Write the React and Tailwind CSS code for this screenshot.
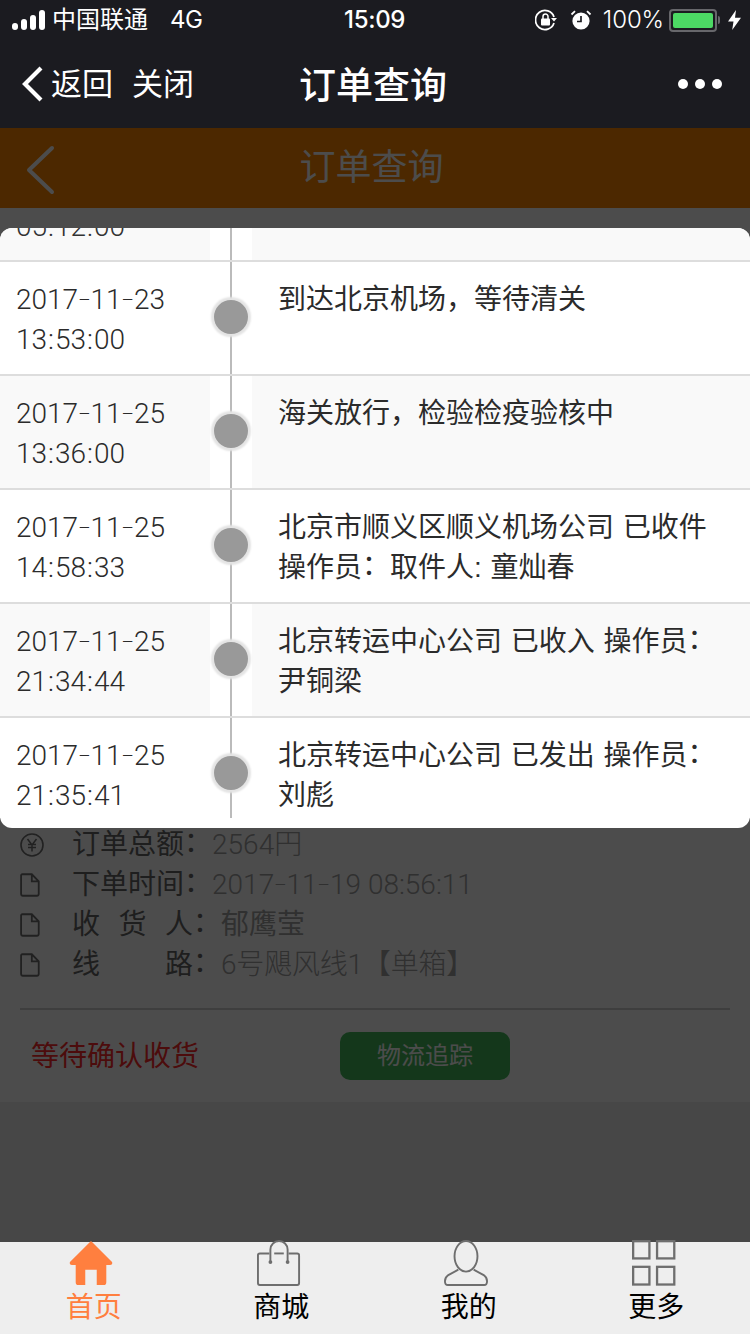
const FONT = "font-['Liberation_Sans','Noto_Sans_CJK_SC',sans-serif]";
const DIGITS = "font-['Roboto','Noto_Sans_CJK_SC',sans-serif] font-light";

const rows = [
  { time: ['2017–11–23', '13:53:00'], text: ['到达北京机场，等待清关'], alt: false },
  { time: ['2017–11–25', '13:36:00'], text: ['海关放行，检验检疫验核中'], alt: true },
  { time: ['2017–11–25', '14:58:33'], text: ['北京市顺义区顺义机场公司 已收件', '操作员：取件人: 童灿春'], alt: false },
  { time: ['2017–11–25', '21:34:44'], text: ['北京转运中心公司 已收入 操作员：', '尹铜梁'], alt: true },
  { time: ['2017–11–25', '21:35:41'], text: ['北京转运中心公司 已发出 操作员：', '刘彪'], alt: false, last: true },
];

function DateText({ value }) {
  const parts = value.split('–');
  return (
    <span className={DIGITS}>
      {parts.map((p, i) => (
        <span key={i}>
          {p}
          {i < parts.length - 1 && <span className="text-[19px] leading-none relative -top-[3px]">–</span>}
        </span>
      ))}
    </span>
  );
}

function TimeText({ value }) {
  const parts = value.split(':');
  return (
    <span className={DIGITS}>
      {parts.map((p, i) => (
        <span key={i}>
          {p}
          {i < parts.length - 1 && <span className="mx-px">:</span>}
        </span>
      ))}
    </span>
  );
}

function Colon() {
  return <span className="relative -top-[2px]">：</span>;
}

function Txt({ value }) {
  const parts = value.split('：');
  return (
    <>
      {parts.map((p, i) => (
        <span key={i}>
          {p}
          {i < parts.length - 1 && <Colon />}
        </span>
      ))}
    </>
  );
}

function Signal() {
  return (
    <svg width="34" height="22" viewBox="0 0 34 22" className="mr-[6px]">
      <rect x="0" y="14" width="6" height="7" rx="3" fill="#fff" />
      <rect x="9" y="10" width="6" height="11" rx="3" fill="#fff" />
      <rect x="18" y="6" width="6" height="15" rx="3" fill="#fff" />
      <rect x="27" y="1" width="6" height="20" rx="3" fill="#fff" />
    </svg>
  );
}

function StatusBar() {
  return (
    <div className="h-10 flex items-center relative text-white text-[24px] pl-3">
      <Signal />
      <span>中国联通</span>
      <span className="ml-[22px] font-['Inter',sans-serif] tracking-[-0.5px]">4G</span>
      <span className="absolute left-[344px] top-[5px] leading-[30px] font-['Inter',sans-serif] font-medium tracking-[-0.3px]">15:09</span>
      <div className="ml-auto flex items-center pr-[9px]">
        <svg width="24" height="22" viewBox="0 0 24 22" fill="none" className="mr-[11px]">
          <path d="M19 14 A 9.5 9.5 0 1 1 19 8" stroke="#fff" strokeWidth="1.8" />
          <path d="M16 9 h6 l-3 3.6 z" fill="#fff" />
          <rect x="6" y="9.5" width="9" height="7" rx="1" fill="#fff" />
          <path d="M8 10 V7.5 a2.5 2.5 0 0 1 5 0 V10" stroke="#fff" strokeWidth="1.5" />
        </svg>
        <svg width="22" height="22" viewBox="0 0 22 22" fill="none" className="mr-[11px]">
          <circle cx="11" cy="12" r="8.6" fill="#fff" />
          <path d="M11 7 V12.5 H7" stroke="#1b1b20" strokeWidth="1.7" />
          <path d="M1.5 5.5 L5 2.2 M20.5 5.5 L17 2.2" stroke="#fff" strokeWidth="1.8" />
        </svg>
        <span className="font-['Inter',sans-serif] font-light mr-[5px] tracking-[-0.1px]">100%</span>
        <div className="w-[48px] h-[23px] rounded-[4px] border-2 border-[#67676b] p-[2px] flex">
          <div className="flex-1 bg-[#4cd964] rounded-[2px]" />
        </div>
        <div className="w-[2px] h-[8px] bg-[#67676b] rounded-r-[2px] ml-[1px] mr-[8px]" />
        <svg width="13" height="20" viewBox="0 0 13 20"><path d="M8 0 L0 11.5 H5.5 L4.2 20 L13 7.8 H7 Z" fill="#fff" /></svg>
      </div>
    </div>
  );
}

function NavBar() {
  return (
    <div className="h-[88px] relative flex items-center text-white pl-[22px] pr-[28px]">
      <svg width="22" height="36" viewBox="0 0 22 36" fill="none" className="mr-[7px]">
        <path d="M19 2 L3 18 L19 34" stroke="#fff" strokeWidth="4.2" />
      </svg>
      <span className="text-[31px] pt-[3px]">返回</span>
      <span className="text-[31px] pt-[3px] ml-[19px]">关闭</span>
      <span className="absolute left-0 right-[4px] top-[19px] text-center text-[37px] font-medium pointer-events-none">订单查询</span>
      <div className="ml-auto flex gap-[7px]">
        <span className="w-[10px] h-[10px] rounded-full bg-white" />
        <span className="w-[10px] h-[10px] rounded-full bg-white" />
        <span className="w-[10px] h-[10px] rounded-full bg-white" />
      </div>
    </div>
  );
}

function PageHeader() {
  return (
    <div className="h-20 bg-[#fd8500] relative flex items-center justify-center pr-[7px]">
      <svg width="30" height="50" viewBox="0 0 30 50" fill="none" className="absolute left-[25px] top-[17px]">
        <path d="M27 3 L4 25 L27 47" stroke="#fff" strokeWidth="4" strokeLinecap="round" strokeLinejoin="round" />
      </svg>
      <span className="text-white text-[36px]">订单查询</span>
    </div>
  );
}

function Doc() {
  return (
    <svg width="20" height="24" viewBox="0 0 22 26" fill="none">
      <path d="M2.5 1.2 H13 L20.6 9 V23 a1.8 1.8 0 0 1 -1.8 1.8 H3 A1.8 1.8 0 0 1 1.2 23 V2.5 A1.3 1.3 0 0 1 2.5 1.2 Z M13 1.2 V9 H20.6" stroke="#6f6f6f" strokeWidth="2" />
    </svg>
  );
}

function Yen() {
  return (
    <svg width="24" height="24" viewBox="0 0 24 24" fill="none">
      <circle cx="12" cy="12" r="11" stroke="#6f6f6f" strokeWidth="1.6" />
      <path d="M7.5 6 L12 12 L16.5 6 M12 12 V18.5 M8 11.5 H16 M8 14.5 H16" stroke="#6f6f6f" strokeWidth="1.5" />
    </svg>
  );
}

function DetailRow({ icon, label, value }) {
  return (
    <div className="h-10 flex items-center text-[28px]">
      <div className="w-[53px] flex shrink-0">{icon}</div>
      <div className="text-[#666] -ml-px">{label}</div>
      <div className="text-[#a0a0a0]">{value}</div>
    </div>
  );
}

function Spaced({ chars }) {
  return (
    <span className="flex">
      <span className="w-[121px] flex justify-between">
        {chars.map((c) => <span key={c}>{c}</span>)}
      </span>
      <span className="w-[28px]"><Colon /></span>
    </span>
  );
}

function Content() {
  return (
    <div className="flex-1 bg-[#eeeeee] flex flex-col">
      <div className="bg-white pt-[617px] h-[894px] px-5">
        <DetailRow icon={<Yen />} label={<Txt value="订单总额：" />} value={<span className={DIGITS}>2564円</span>} />
        <DetailRow icon={<Doc />} label={<Txt value="下单时间：" />} value={<DateText value="2017–11–19 08:56:11" />} />
        <DetailRow icon={<Doc />} label={<Spaced chars={['收', '货', '人']} />} value="郁鹰莹" />
        <DetailRow icon={<Doc />} label={<Spaced chars={['线', '路']} />} value={<span className={`${DIGITS} tracking-[-0.2px]`}>6号飓风线1【单箱】</span>} />
        <div className="h-[2px] bg-[#d0d0d0] mt-[23px]" />
        <div className="flex items-center mt-[22px] pl-[11px]">
          <span className="text-[28px] text-[#ff2b2b] w-[309px] pt-[2px]">等待确认收货</span>
          <span className="w-[170px] h-12 rounded-[10px] bg-[#44b95a] text-white text-[24px] flex items-center justify-center">物流追踪</span>
        </div>
      </div>
    </div>
  );
}

function TabIcon({ children }) {
  return <div className="h-[48px] flex items-start justify-center -mt-[2px] pr-[5px]">{children}</div>;
}

function TabBar() {
  const stroke = '#6e6e6e';
  const tabs = [
    {
      label: '首页', active: true,
      icon: (
        <svg width="44" height="46" viewBox="0 0 46 48">
          <path d="M23 1 L45 23 Q46 26 43 26 H39 V44 Q39 47 36 47 H29 V31 H17 V47 H10 Q7 47 7 44 V26 H3 Q0 26 1 23 Z" fill="#ff7f3f" />
        </svg>
      ),
    },
    {
      label: '商城',
      icon: (
        <svg width="44" height="46" viewBox="0 0 46 48" fill="none" stroke={stroke} strokeWidth="2">
          <path d="M13 14 H3 a2 2 0 0 0 -2 2 V45 a2 2 0 0 0 2 2 H42 a2 2 0 0 0 2 -2 V16 a2 2 0 0 0 -2 -2 H33" />
          <path d="M14 22 V10 a9 9 0 0 1 18 0 V22" />
          <path d="M18 14 H28" />
          <circle cx="14" cy="23" r="2" fill={stroke} stroke="none" />
          <circle cx="32" cy="23" r="2" fill={stroke} stroke="none" />
        </svg>
      ),
    },
    {
      label: '我的',
      icon: (
        <svg width="44" height="46" viewBox="0 0 46 48" fill="none" stroke={stroke} strokeWidth="2">
          <ellipse cx="23" cy="17" rx="12" ry="16" />
          <path d="M15 31 L4 37 Q1 39 1 43 Q1 47 4 47 H42 Q45 47 45 43 Q45 39 42 37 L31 31" />
        </svg>
      ),
    },
    {
      label: '更多',
      icon: (
        <svg width="44" height="46" viewBox="0 0 46 48" fill="none" stroke={stroke} strokeWidth="2.4">
          <rect x="1.2" y="1.2" width="17" height="18" />
          <rect x="26.2" y="1.2" width="18" height="18" />
          <rect x="1.2" y="28" width="17" height="18.5" />
          <rect x="26.2" y="28" width="18" height="18.5" />
        </svg>
      ),
    },
  ];
  return (
    <div className="h-[92px] bg-[#eeeeee] grid grid-cols-4 relative z-20">
      {tabs.map((t) => (
        <div key={t.label} className="flex flex-col items-center">
          <TabIcon>{t.icon}</TabIcon>
          <span className={`text-[28px] leading-[36px] pt-[2px] ${t.active ? 'text-[#ff7f3f]' : 'text-black'}`}>{t.label}</span>
        </div>
      ))}
    </div>
  );
}

function TimelineRow({ time, text, alt, last }) {
  const bg = alt ? 'bg-[#f9f9f9]' : 'bg-white';
  return (
    <div className={`flex ${last ? 'h-[100px]' : 'h-[114px] border-b-2 border-[#dddddd]'} text-[28px] leading-[40px] text-[#2b2b2b]`}>
      <div className={`w-[210px] pl-4 pt-[18px] ${bg}`}>
        <div><DateText value={time[0]} /></div>
        <div><TimeText value={time[1]} /></div>
      </div>
      <div className="w-[42px] relative bg-white">
        <div className="absolute left-5 top-0 bottom-0 w-[2px] bg-[#bbbbbb]" />
        <div className="absolute left-1 top-[38px] w-[34px] h-[34px] rounded-full bg-[#999999] shadow-[0_0_2px_3px_#e4e4e4]" />
      </div>
      <div className={`flex-1 pl-[27px] pt-[18px] [word-spacing:1px] ${bg}`}>
        {text.map((t) => <div key={t} className="-ml-px"><Txt value={t} /></div>)}
      </div>
    </div>
  );
}

function Modal() {
  return (
    <div className="absolute left-0 right-0 top-[228px] h-[600px] rounded-[12px] bg-white overflow-hidden z-30">
      <div className="h-[34px] flex border-b-2 border-[#dddddd] text-[28px] leading-[40px] text-[#333]">
        <div className="w-[210px] pl-4 bg-[#f9f9f9] overflow-hidden">
          <div className="-mt-[21px]"><TimeText value="05:12:00" /></div>
        </div>
        <div className="w-[42px] relative bg-white">
          <div className="absolute left-5 top-0 bottom-0 w-[2px] bg-[#bbbbbb]" />
        </div>
        <div className="flex-1 bg-[#f9f9f9]" />
      </div>
      {rows.map((r) => <TimelineRow key={r.time[1]} {...r} />)}
    </div>
  );
}

export default function App() {
  return (
    <div className={`relative w-[750px] h-[1334px] overflow-hidden flex flex-col bg-white ${FONT}`}>
      <div className="bg-[#1b1b20] relative z-20">
        <StatusBar />
        <NavBar />
      </div>
      <PageHeader />
      <Content />
      <div className="absolute left-0 right-0 top-[128px] h-[1114px] bg-black/70 z-10" />
      <Modal />
      <TabBar />
    </div>
  );
}
